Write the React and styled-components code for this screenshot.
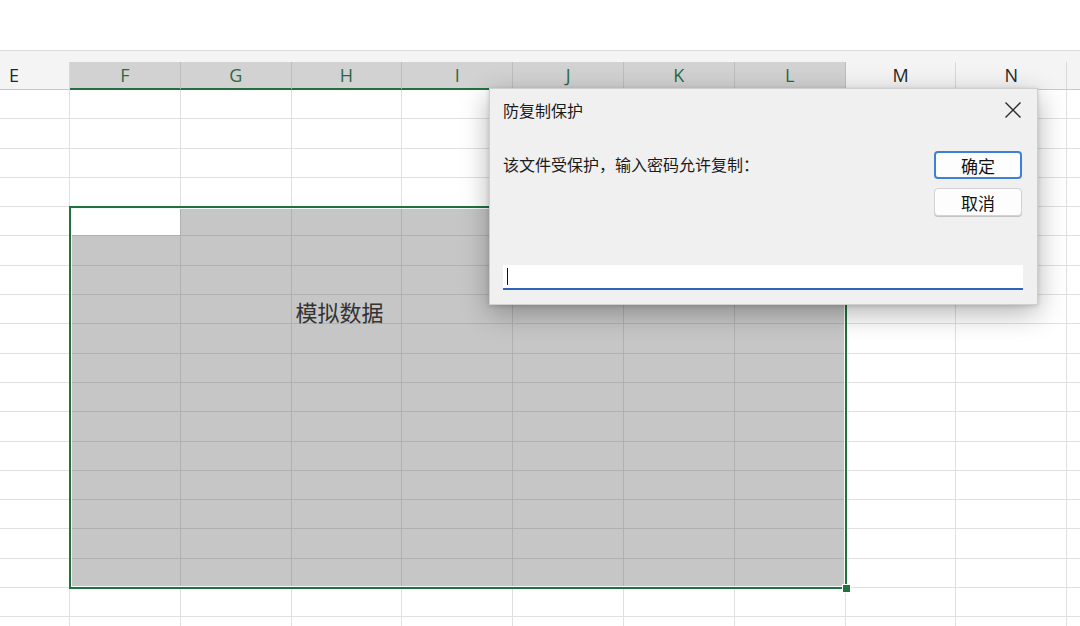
import styled, { createGlobalStyle } from "styled-components";

const COL_W = 110.8;
const FIRST_W = 70;
const ROW_H = 29.3;
const HEAD_H = 28;
// the last column is cut by the window edge, its letter is not shown
const COLS = ["E", "F", "G", "H", "I", "J", "K", "L", "M", "N", ""];
const ROWS = 19;
// selection: columns F..L (1..7), rows 5..17 (index 4..16)
const SEL = { c0: 1, c1: 7, r0: 4, r1: 16 };

const GlobalStyle = createGlobalStyle`
  html, body {
    margin: 0;
    padding: 0;
    background: #ffffff;
    overflow: hidden;
  }
  body {
    font-family: "Noto Sans CJK SC", "Noto Sans", sans-serif;
  }
`;

const Page = styled.div`
  position: relative;
  width: 1080px;
  height: 626px;
  overflow: hidden;
  background: #ffffff;
`;

const TopArea = styled.div`
  height: 50px;
  background: #ffffff;
  border-bottom: 1px solid #dadada;
`;

const Strip = styled.div`
  height: 11px;
  background: #f4f4f4;
`;

const SheetWrap = styled.div`
  position: relative;
`;

const Sheet = styled.div`
  display: grid;
  grid-template-columns: ${FIRST_W}px repeat(${COLS.length - 1}, ${COL_W}px);
  grid-template-rows: ${HEAD_H}px repeat(${ROWS}, ${ROW_H}px);
  width: max-content;
`;

const HeaderCell = styled.div`
  box-sizing: border-box;
  display: flex;
  align-items: center;
  justify-content: ${(p) => (p.$first ? "flex-start" : "center")};
  padding-left: ${(p) => (p.$first ? "9px" : "0")};
  padding-bottom: 1px;
  font-family: "Open Sans", "Liberation Sans", sans-serif;
  font-size: 18px;
  color: ${(p) => (p.$selected ? "#2a6b40" : "#262626")};
  background: ${(p) => (p.$selected ? "#d2d2d2" : "#f4f4f4")};
  border-right: 1px solid ${(p) => (p.$selected ? "#bdbdbd" : "#d8d8d8")};
  border-bottom: ${(p) => (p.$selected ? "2px solid #21703f" : "1px solid #c8c8c8")};
`;

const Cell = styled.div`
  box-sizing: border-box;
  display: flex;
  align-items: center;
  padding-left: 4px;
  padding-top: 4px;
  white-space: nowrap;
  font-size: 22px;
  color: #333333;
  background: ${(p) => (p.$active ? "#ffffff" : p.$selected ? "#c6c6c6" : "#ffffff")};
  border-right: 1px solid ${(p) => (p.$selected ? "#b0b0b0" : "#e0e0e0")};
  border-bottom: 1px solid ${(p) => (p.$selected ? "#b0b0b0" : "#e0e0e0")};
`;

const SelectionBox = styled.div`
  position: absolute;
  box-sizing: border-box;
  border: 2px solid #21703f;
  box-shadow: inset 0 0 0 1px #f4fbf6;
  pointer-events: none;
`;

const FillHandle = styled.div`
  position: absolute;
  width: 7px;
  height: 7px;
  background: #21703f;
  border: 1px solid #ffffff;
`;

const Dialog = styled.div`
  position: absolute;
  left: 489px;
  top: 88px;
  width: 549px;
  height: 217px;
  box-sizing: border-box;
  display: flex;
  flex-direction: column;
  background: #f0f0f0;
  border: 1px solid #cfcfcf;
  box-shadow: 0 8px 26px rgba(0, 0, 0, 0.3), 0 1px 4px rgba(0, 0, 0, 0.15);
`;

const TitleBar = styled.div`
  height: 41px;
  display: flex;
  align-items: center;
  justify-content: space-between;
  padding: 0 13px 0 13px;
`;

const Title = styled.span`
  font-size: 16px;
  color: #1b1b1b;
`;

const CloseButton = styled.button`
  width: 22px;
  height: 22px;
  display: flex;
  align-items: center;
  justify-content: center;
  padding: 0;
  border: none;
  background: transparent;
`;

const Body = styled.div`
  flex: 1;
  display: flex;
  justify-content: space-between;
  padding: 21px 15px 0 13px;
`;

const Message = styled.div`
  font-size: 16px;
  line-height: 26px;
  color: #1b1b1b;
`;

const Buttons = styled.div`
  display: flex;
  flex-direction: column;
  gap: 9px;
`;

const Button = styled.button`
  width: 88px;
  height: 28px;
  box-sizing: border-box;
  font-family: "Noto Sans CJK SC", sans-serif;
  font-size: 17px;
  line-height: 1;
  color: #111111;
  background: #fdfdfd;
  border-radius: 4px;
  border: ${(p) => (p.$primary ? "2px solid #3f7fd8" : "1px solid #d3d3d3")};
  box-shadow: ${(p) => (p.$primary ? "none" : "0 1px 0 #c4c4c4")};
`;

const Input = styled.div`
  margin: 0 14px 14px 13px;
  height: 25px;
  box-sizing: border-box;
  display: flex;
  align-items: center;
  padding-left: 4px;
  background: #ffffff;
  border-bottom: 2px solid #2f63b8;
`;

const Caret = styled.span`
  width: 1px;
  height: 17px;
  background: #111111;
`;

const CloseIcon = () => (
  <svg width="18" height="18" viewBox="0 0 18 18">
    <path d="M1.5 1.5 L16.5 16.5 M16.5 1.5 L1.5 16.5" stroke="#2a2a2a" strokeWidth="1.4" fill="none" />
  </svg>
);

const colLeft = (c) => (c === 0 ? 0 : FIRST_W + (c - 1) * COL_W);

export default function App() {
  const inSel = (r, c) => r >= SEL.r0 && r <= SEL.r1 && c >= SEL.c0 && c <= SEL.c1;

  const selLeft = colLeft(SEL.c0) - 1;
  const selTop = HEAD_H + SEL.r0 * ROW_H - 1;
  const selWidth = (SEL.c1 - SEL.c0 + 1) * COL_W + 2;
  const selHeight = (SEL.r1 - SEL.r0 + 1) * ROW_H + 2;

  return (
    <Page>
      <GlobalStyle />
      <TopArea />
      <Strip />
      <SheetWrap>
        <Sheet>
          {COLS.map((name, c) => (
            <HeaderCell key={`h${c}`} $first={c === 0} $selected={c >= SEL.c0 && c <= SEL.c1}>
              {name}
            </HeaderCell>
          ))}
          {Array.from({ length: ROWS }).map((_, r) =>
            COLS.map((name, c) => (
              <Cell
                key={`c${c}-${r}`}
                $selected={inSel(r, c)}
                $active={r === SEL.r0 && c === SEL.c0}
              >
                {r === 7 && name === "H" ? "模拟数据" : ""}
              </Cell>
            ))
          )}
        </Sheet>
        <SelectionBox
          style={{ left: selLeft, top: selTop, width: selWidth, height: selHeight }}
        />
        <FillHandle
          style={{ left: selLeft + selWidth - 5, top: selTop + selHeight - 5 }}
        />
      </SheetWrap>

      <Dialog>
        <TitleBar>
          <Title>防复制保护</Title>
          <CloseButton>
            <CloseIcon />
          </CloseButton>
        </TitleBar>
        <Body>
          <Message>该文件受保护，输入密码允许复制：</Message>
          <Buttons>
            <Button $primary>确定</Button>
            <Button>取消</Button>
          </Buttons>
        </Body>
        <Input>
          <Caret />
        </Input>
      </Dialog>
    </Page>
  );
}
